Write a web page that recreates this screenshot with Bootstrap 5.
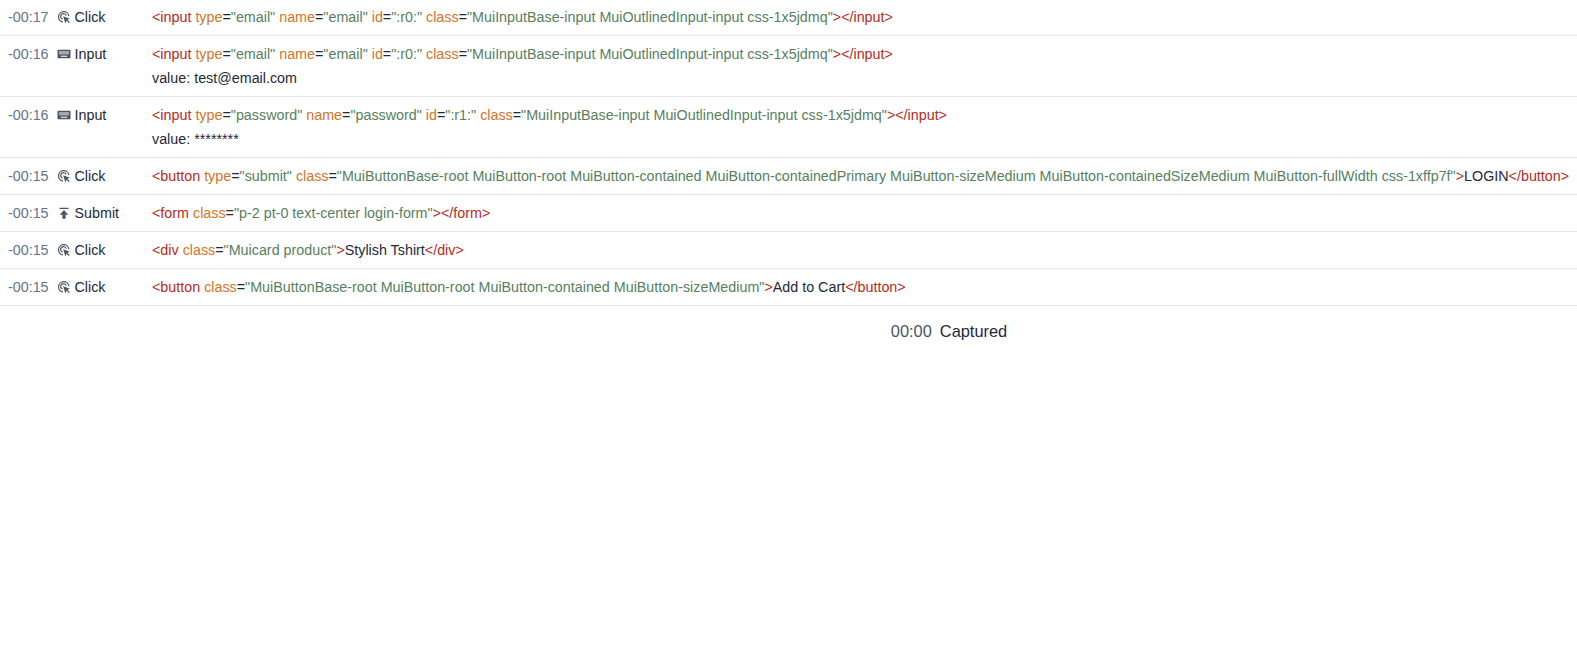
<!DOCTYPE html>
<html lang="en">
<head>
<meta charset="utf-8">
<title>Session timeline</title>
<link href="https://cdn.jsdelivr.net/npm/bootstrap@5.3.0/dist/css/bootstrap.min.css" rel="stylesheet">
<style>
body { font-family: "Liberation Sans", Arial, sans-serif; font-size: 14.32px; line-height: 24px; color: #1f2937; background: #fff; margin: 0; overflow: hidden; }
.tl-list { margin-top: -1px; }
.tl-row { padding: 6px 8px; border-bottom: 1px solid #e5e7eb; white-space: nowrap; }
.tl-time { width: 41px; color: #64748b; flex: none; }
.tl-action { width: 95px; margin-left: 8px; flex: none; }
.tl-ico { width: 14px; height: 14px; margin: 0 3.5px 0 0; flex: none; color: #4b5563; }
.tag { color: #b42c22; }
.att { color: #d0762a; }
.val { color: #588060; }
.tl-end { font-size: 16.4px; padding: 13px 0 0 321px; }
.tl-end-time { color: #4b5563; }
</style>
</head>
<body>
<svg width="0" height="0" class="d-block position-absolute">
  <defs>
    <symbol id="i-click" viewBox="0 0 14 14">
      <path d="M11.9 6.2A5.2 5.2 0 1 0 6 12" fill="none" stroke="currentColor" stroke-width="1.2"/>
      <path d="M9.3 5.6A2.9 2.9 0 1 0 5.6 9.3" fill="none" stroke="currentColor" stroke-width="1.2"/>
      <path d="M6.2 6.2l6.8 2.5-2.6 1.1 2.4 2.4-.9.9-2.4-2.4-1.2 2.7z" fill="currentColor"/>
    </symbol>
    <symbol id="i-key" viewBox="0 0 14 14">
      <path fill-rule="evenodd" d="M1.3 2.7h11.4c.5 0 .8.4.8.8v7c0 .5-.3.8-.8.8H1.3c-.5 0-.8-.3-.8-.8v-7c0-.4.3-.8.8-.8zM2 4.6v.8h10v-.8zM2 6.4v.8h10v-.8zM3.8 8.8v.9h6.4v-.9z" fill="currentColor"/>
    </symbol>
    <symbol id="i-submit" viewBox="0 0 14 14">
      <path d="M2.5 1.8h9v1.3h-9zM7 4l4.3 4.8H8.6v4H5.4v-4H2.7z" fill="currentColor"/>
    </symbol>
  </defs>
</svg>

<div class="tl-list">
  <div class="tl-row d-flex">
    <div class="tl-time">-00:17</div>
    <div class="tl-action d-flex align-items-center align-self-start"><svg class="tl-ico"><use href="#i-click"/></svg>Click</div>
    <div><span class="tag">&lt;input</span> <span class="att">type</span>=<span class="val">"email"</span> <span class="att">name</span>=<span class="val">"email"</span> <span class="att">id</span>=<span class="val">":r0:"</span> <span class="att">class</span>=<span class="val">"MuiInputBase-input MuiOutlinedInput-input css-1x5jdmq"</span><span class="tag">&gt;&lt;/input&gt;</span></div>
  </div>
  <div class="tl-row d-flex">
    <div class="tl-time">-00:16</div>
    <div class="tl-action d-flex align-items-center align-self-start"><svg class="tl-ico"><use href="#i-key"/></svg>Input</div>
    <div>
      <div><span class="tag">&lt;input</span> <span class="att">type</span>=<span class="val">"email"</span> <span class="att">name</span>=<span class="val">"email"</span> <span class="att">id</span>=<span class="val">":r0:"</span> <span class="att">class</span>=<span class="val">"MuiInputBase-input MuiOutlinedInput-input css-1x5jdmq"</span><span class="tag">&gt;&lt;/input&gt;</span></div>
      <div>value: test@email.com</div>
    </div>
  </div>
  <div class="tl-row d-flex">
    <div class="tl-time">-00:16</div>
    <div class="tl-action d-flex align-items-center align-self-start"><svg class="tl-ico"><use href="#i-key"/></svg>Input</div>
    <div>
      <div><span class="tag">&lt;input</span> <span class="att">type</span>=<span class="val">"password"</span> <span class="att">name</span>=<span class="val">"password"</span> <span class="att">id</span>=<span class="val">":r1:"</span> <span class="att">class</span>=<span class="val">"MuiInputBase-input MuiOutlinedInput-input css-1x5jdmq"</span><span class="tag">&gt;&lt;/input&gt;</span></div>
      <div>value: ********</div>
    </div>
  </div>
  <div class="tl-row d-flex">
    <div class="tl-time">-00:15</div>
    <div class="tl-action d-flex align-items-center align-self-start"><svg class="tl-ico"><use href="#i-click"/></svg>Click</div>
    <div><span class="tag">&lt;button</span> <span class="att">type</span>=<span class="val">"submit"</span> <span class="att">class</span>=<span class="val">"MuiButtonBase-root MuiButton-root MuiButton-contained MuiButton-containedPrimary MuiButton-sizeMedium MuiButton-containedSizeMedium MuiButton-fullWidth css-1xffp7f"</span><span class="tag">&gt;</span>LOGIN<span class="tag">&lt;/button&gt;</span></div>
  </div>
  <div class="tl-row d-flex">
    <div class="tl-time">-00:15</div>
    <div class="tl-action d-flex align-items-center align-self-start"><svg class="tl-ico"><use href="#i-submit"/></svg>Submit</div>
    <div><span class="tag">&lt;form</span> <span class="att">class</span>=<span class="val">"p-2 pt-0 text-center login-form"</span><span class="tag">&gt;&lt;/form&gt;</span></div>
  </div>
  <div class="tl-row d-flex">
    <div class="tl-time">-00:15</div>
    <div class="tl-action d-flex align-items-center align-self-start"><svg class="tl-ico"><use href="#i-click"/></svg>Click</div>
    <div><span class="tag">&lt;div</span> <span class="att">class</span>=<span class="val">"Muicard product"</span><span class="tag">&gt;</span>Stylish Tshirt<span class="tag">&lt;/div&gt;</span></div>
  </div>
  <div class="tl-row d-flex">
    <div class="tl-time">-00:15</div>
    <div class="tl-action d-flex align-items-center align-self-start"><svg class="tl-ico"><use href="#i-click"/></svg>Click</div>
    <div><span class="tag">&lt;button</span> <span class="att">class</span>=<span class="val">"MuiButtonBase-root MuiButton-root MuiButton-contained MuiButton-sizeMedium"</span><span class="tag">&gt;</span>Add to Cart<span class="tag">&lt;/button&gt;</span></div>
  </div>
</div>
<div class="tl-end d-flex justify-content-center gap-2">
  <span class="tl-end-time">00:00</span><span>Captured</span>
</div>
</body>
</html>
